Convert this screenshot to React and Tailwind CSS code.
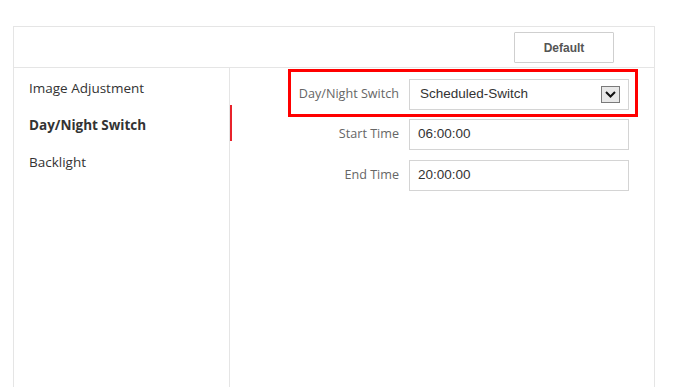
const MENU = ['Image Adjustment', 'Day/Night Switch', 'Backlight'];

const Chevron = () => (
    <span className="flex items-center justify-center w-[19px] h-[17px] border border-[#7a7a7a] bg-[#e8e8e8]">
        <svg width="11" height="7" viewBox="0 0 11 7">
            <path d="M1 1l4.5 4.5L10 1" fill="none" stroke="#111" strokeWidth="2" />
        </svg>
    </span>
);

const Field = ({ label, pad = 'pl-[8px]', children }) => (
    <div className="flex items-center gap-[10px]">
        <div className="w-[108px] text-right text-[12.6px] text-[#666] font-['Open_Sans',sans-serif]">
            {label}
        </div>
        <div className={`w-[220px] h-[31px] border border-[#d4d4d4] bg-white flex items-center ${pad} pr-[8px] text-[13.5px] text-[#333] font-['Liberation_Sans',Arial,sans-serif]`}>
            {children}
        </div>
    </div>
);

export default function App() {
    const active = 1;

    return (
        <div className="w-[678px] h-[387px] overflow-hidden bg-white pt-[26px] pl-[13px]">
            <div className="w-[642px] h-[400px] border border-[#e5e5e5] flex flex-col">
                {/* header with Default button */}
                <div className="h-[41px] shrink-0 border-b border-[#e5e5e5] flex justify-end items-start pr-[40px]">
                    <button className="mt-[5px] w-[100px] h-[31px] border border-[#cfcfcf] bg-white rounded-[1px] text-[12px] font-bold text-[#555] font-['Liberation_Sans',Arial,sans-serif]">
                        Default
                    </button>
                </div>

                <div className="flex flex-1">
                    {/* left menu */}
                    <div className="w-[216px] shrink-0 border-r border-[#e5e5e5] pt-[2px]">
                        {MENU.map((item, i) => (
                            <div
                                key={item}
                                className={`relative h-[37px] flex items-center pl-[15px] text-[13.5px] text-[#333] font-['Open_Sans',sans-serif] ${i === active ? 'font-bold' : ''}`}
                            >
                                {item}
                                {i === active && (
                                    <span className="absolute right-[-3px] top-[-2px] w-[2px] h-[36px] bg-[#e8232b]" />
                                )}
                            </div>
                        ))}
                    </div>

                    {/* settings form */}
                    <div className="flex-1 pt-[1px]">
                        <div className="ml-[58px] w-[350px] h-[48px] border-[3px] border-[#f00] pt-[7px]">
                            <Field label="Day/Night Switch" pad="pl-[10px]">
                                <span className="flex-1">Scheduled-Switch</span>
                                <Chevron />
                            </Field>
                        </div>
                        <div className="ml-[61px] mt-[2px]">
                            <Field label="Start Time">06:00:00</Field>
                        </div>
                        <div className="ml-[61px] mt-[10px]">
                            <Field label="End Time">20:00:00</Field>
                        </div>
                    </div>
                </div>
            </div>
        </div>
    );
}
